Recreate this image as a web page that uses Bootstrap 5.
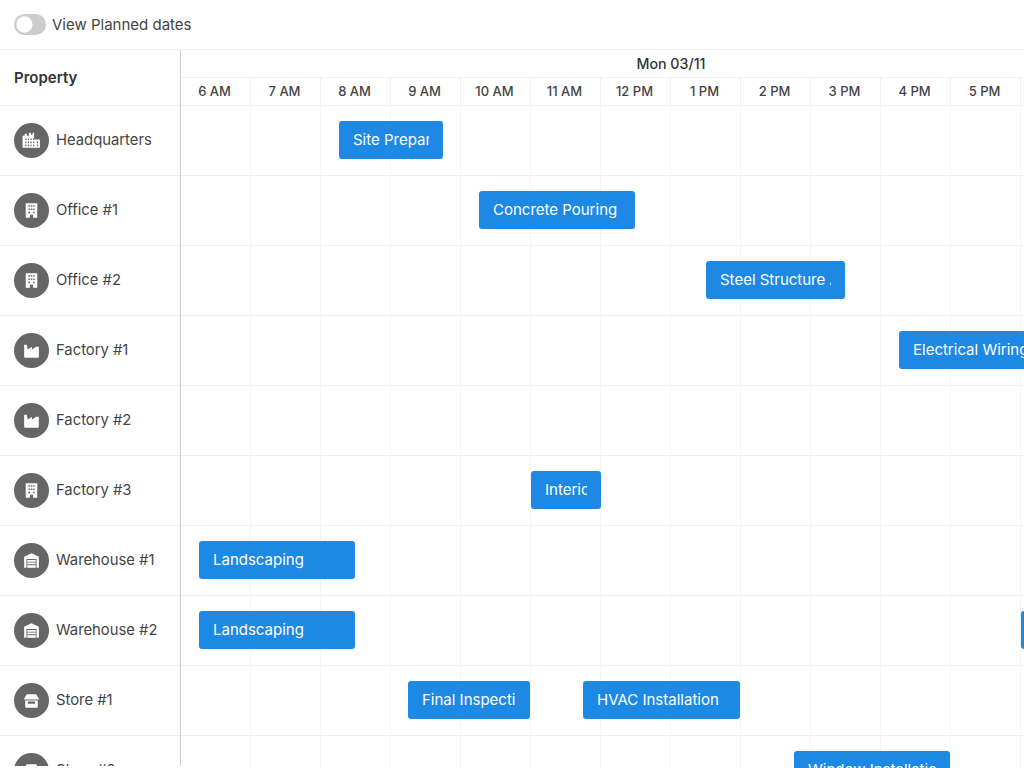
<!DOCTYPE html>
<html lang="en">
<head>
<meta charset="utf-8">
<title>Schedule</title>
<link rel="stylesheet" href="https://cdn.jsdelivr.net/npm/bootstrap@5.3.0/dist/css/bootstrap.min.css">
<style>
html,body{height:768px;overflow:hidden}
body{font-family:Inter,"Liberation Sans",sans-serif;font-size:15px;color:#444;background:#fff}
.topbar{height:50px;padding-left:14px;border-bottom:1px solid #f0f0f0;gap:6px}
.topbar .form-check{padding:0;margin:0;min-height:0;display:flex}
.topbar .form-check-input{width:32px;height:21px;margin:0;float:none;background-color:#ccc;border:0;--bs-form-switch-bg:url("data:image/svg+xml,<svg xmlns='http://www.w3.org/2000/svg' viewBox='-4 -4 8 8'><circle r='3.1' fill='%23fff'/></svg>")}
.topbar label{padding-top:2px}
.sched{height:718px;overflow:hidden}
.side{width:181px;flex:none;border-right:1px solid #ccc;height:716px;overflow:hidden}
.side-head{height:56px;padding-left:14px;padding-top:2px;font-weight:600;font-size:15px;color:#333;border-bottom:1px solid #f0f0f0}
.prop{height:70px;padding-left:14px;border-bottom:1px solid #f0f0f0;gap:7px;font-size:14.8px}
.prop-name{margin-bottom:1px}
.disc{width:35px;height:35px;border-radius:50%;background:#666;flex:none}
.disc svg{width:21px;height:21px;fill:#fff}
.timeline{flex:1;min-width:0;overflow:hidden}
.dayline{height:28px;font-weight:500;font-size:14.2px;color:#333;border-bottom:1px solid #f0f0f0;width:980px}
.hours{height:28px;border-bottom:1px solid #f0f0f0}
.hr{width:70px;flex:none;border-right:1px solid #f0f0f0;font-size:13px;font-weight:500;color:#444;padding-right:2px}
.lane{height:70px;border-bottom:1px solid #f0f0f0;position:relative}
.slot{width:70px;flex:none;border-right:1px solid #f5f5f5}
.ev{position:absolute;top:15px;height:38px;background:#1e88e5;border-radius:3px;color:#fff;padding:0 14px;line-height:38px;font-size:15px}
.ev span{display:block;overflow:hidden;white-space:nowrap}
</style>
</head>
<body>
<div class="topbar d-flex align-items-center">
  <div class="form-check form-switch"><input class="form-check-input" type="checkbox" role="switch" id="planned"></div>
  <label for="planned" class="form-check-label">View Planned dates</label>
</div>
<div class="sched d-flex">
  <div class="side">
    <div class="side-head d-flex align-items-center">Property</div>
    <div class="prop d-flex align-items-center"><span class="disc d-flex align-items-center justify-content-center"><svg viewBox="0 0 20 20"><path fill-rule="evenodd" d="M1.500 17V5.500h2V3.500h2v2h2V2.500h2v2h1.500V2.500h1.500V9h5.500v8zM4 8v1.500h1.200V8zm2.500 0v1.500h1.200V8zm2.500 0v1.500h1.200V8zm2.500 0v1.500h1.200V8zM4 11v1.500h1.200V11zm2.500 0v1.500h1.200V11zm2.500 0v1.500h1.200V11zm2.500 0v1.500h1.200V11zm3.500 0v1.500h1.200V11zM4 14v1.500h1.200V14zm2.500 0v1.500h1.200V14zm2.500 0v1.500h1.200V14zm2.500 0v1.500h1.200V14zm3.500 0v1.500h1.200V14z"/></svg></span><span class="prop-name">Headquarters</span></div>
    <div class="prop d-flex align-items-center"><span class="disc d-flex align-items-center justify-content-center"><svg viewBox="0 0 20 20"><path fill-rule="evenodd" d="M4.500 3h11v14h-4v-3h-3v3h-4zM7 5v1.500h1.500V5zm2.300 0v1.500h1.500V5zm2.300 0v1.500H13V5zM7 8v1.500h1.500V8zm2.300 0v1.500h1.500V8zm2.300 0v1.500H13V8zM7 11v1.500h1.500V11zm4.600 0v1.500H13V11z"/></svg></span><span class="prop-name">Office #1</span></div>
    <div class="prop d-flex align-items-center"><span class="disc d-flex align-items-center justify-content-center"><svg viewBox="0 0 20 20"><path fill-rule="evenodd" d="M4.500 3h11v14h-4v-3h-3v3h-4zM7 5v1.500h1.500V5zm2.300 0v1.500h1.500V5zm2.300 0v1.500H13V5zM7 8v1.500h1.500V8zm2.300 0v1.500h1.500V8zm2.300 0v1.500H13V8zM7 11v1.500h1.500V11zm4.600 0v1.500H13V11z"/></svg></span><span class="prop-name">Office #2</span></div>
    <div class="prop d-flex align-items-center"><span class="disc d-flex align-items-center justify-content-center"><svg viewBox="0 0 20 20"><path d="M3 4.500h2.500L6.500 9l4-2.500V9l4-2.500H17v9.500q0 1-1 1H4q-1 0-1-1z"/></svg></span><span class="prop-name">Factory #1</span></div>
    <div class="prop d-flex align-items-center"><span class="disc d-flex align-items-center justify-content-center"><svg viewBox="0 0 20 20"><path d="M3 4.500h2.500L6.500 9l4-2.500V9l4-2.500H17v9.500q0 1-1 1H4q-1 0-1-1z"/></svg></span><span class="prop-name">Factory #2</span></div>
    <div class="prop d-flex align-items-center"><span class="disc d-flex align-items-center justify-content-center"><svg viewBox="0 0 20 20"><path fill-rule="evenodd" d="M4.500 3h11v14h-4v-3h-3v3h-4zM7 5v1.500h1.500V5zm2.300 0v1.500h1.500V5zm2.300 0v1.500H13V5zM7 8v1.500h1.500V8zm2.300 0v1.500h1.500V8zm2.300 0v1.500H13V8zM7 11v1.500h1.500V11zm4.600 0v1.500H13V11z"/></svg></span><span class="prop-name">Factory #3</span></div>
    <div class="prop d-flex align-items-center"><span class="disc d-flex align-items-center justify-content-center"><svg viewBox="0 0 20 20"><path fill-rule="evenodd" d="M10 3l7 3.500V17h-2.200V8.500H5.200V17H3V6.500zM6 9.500h8v1.600H6zm0 2.500h8v1.600H6zm0 2.500h8V17H6z"/></svg></span><span class="prop-name">Warehouse #1</span></div>
    <div class="prop d-flex align-items-center"><span class="disc d-flex align-items-center justify-content-center"><svg viewBox="0 0 20 20"><path fill-rule="evenodd" d="M10 3l7 3.500V17h-2.200V8.500H5.200V17H3V6.500zM6 9.500h8v1.600H6zm0 2.500h8v1.600H6zm0 2.500h8V17H6z"/></svg></span><span class="prop-name">Warehouse #2</span></div>
    <div class="prop d-flex align-items-center"><span class="disc d-flex align-items-center justify-content-center"><svg viewBox="0 0 20 20"><path fill-rule="evenodd" d="M5.500 4h9l2.500 4v1H3V8zM4 10h12v6q0 1-1 1H5q-1 0-1-1zm2.500 1v2h7v-2z"/></svg></span><span class="prop-name">Store #1</span></div>
    <div class="prop d-flex align-items-center"><span class="disc d-flex align-items-center justify-content-center"><svg viewBox="0 0 20 20"><path fill-rule="evenodd" d="M5.500 4h9l2.500 4v1H3V8zM4 10h12v6q0 1-1 1H5q-1 0-1-1zm2.500 1v2h7v-2z"/></svg></span><span class="prop-name">Store #2</span></div>
  </div>
  <div class="timeline">
    <div class="dayline d-flex align-items-center justify-content-center">Mon 03/11</div>
    <div class="hours d-flex">
      <div class="hr d-flex align-items-center justify-content-center">6 AM</div><div class="hr d-flex align-items-center justify-content-center">7 AM</div><div class="hr d-flex align-items-center justify-content-center">8 AM</div><div class="hr d-flex align-items-center justify-content-center">9 AM</div><div class="hr d-flex align-items-center justify-content-center">10 AM</div><div class="hr d-flex align-items-center justify-content-center">11 AM</div><div class="hr d-flex align-items-center justify-content-center">12 PM</div><div class="hr d-flex align-items-center justify-content-center">1 PM</div><div class="hr d-flex align-items-center justify-content-center">2 PM</div><div class="hr d-flex align-items-center justify-content-center">3 PM</div><div class="hr d-flex align-items-center justify-content-center">4 PM</div><div class="hr d-flex align-items-center justify-content-center">5 PM</div>
    </div>
    <div id="lanes"></div>
  </div>
</div>
<script src="https://cdn.jsdelivr.net/npm/bootstrap@5.3.0/dist/js/bootstrap.bundle.min.js"></script>
<script>
var data=[[["Site Preparation",339,104]],[["Concrete Pouring",479,156]],[["Steel Structure Assembly",706,139]],[["Electrical Wiring",899,156]],[],[["Interior Finishing",531,70]],[["Landscaping",199,156]],[["Landscaping",199,156],["Roofing",1021,156]],[["Final Inspection",408,122],["HVAC Installation",583,157]],[["Window Installation",794,156]]];
var root=document.getElementById('lanes');
data.forEach(function(evs){
  var lane=document.createElement('div');lane.className='lane d-flex';
  for(var i=0;i<12;i++){var s=document.createElement('div');s.className='slot';lane.appendChild(s);}
  evs.forEach(function(e){
    var d=document.createElement('div');d.className='ev';d.style.left=(e[1]-181)+'px';d.style.width=e[2]+'px';
    var t=document.createElement('span');t.textContent=e[0];d.appendChild(t);lane.appendChild(d);
  });
  root.appendChild(lane);
});
</script>
</body>
</html>
